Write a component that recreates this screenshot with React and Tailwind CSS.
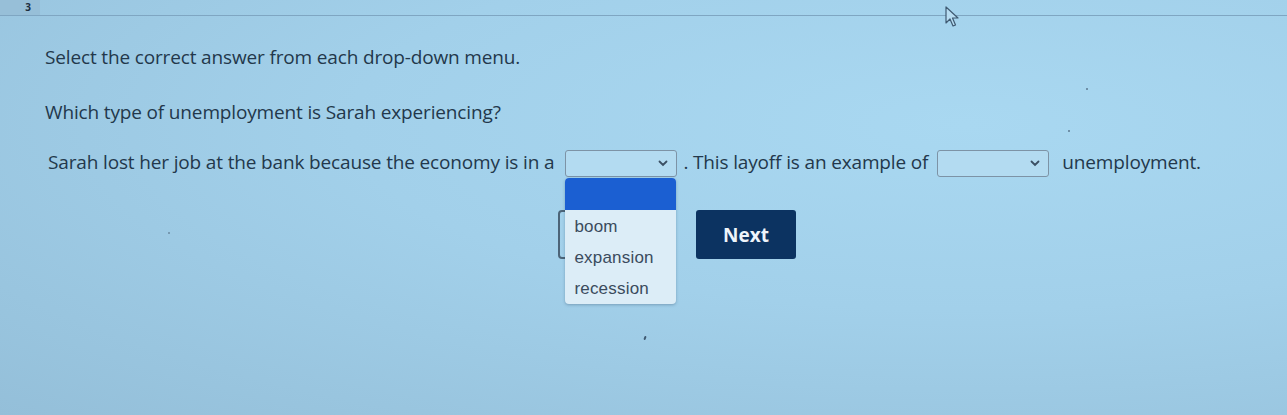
import React from 'react';

const OPTIONS = ['boom', 'expansion', 'recession'];

function Chevron() {
  return (
    <svg width="10" height="7" viewBox="0 0 10 7" className="text-[#3b4f63]">
      <path d="M1.5 1.5 L5 5 L8.5 1.5" fill="none" stroke="currentColor" strokeWidth="1.8" strokeLinecap="round" />
    </svg>
  );
}

function Select({ open }) {
  return (
    <span className="relative inline-flex align-middle">
      <span className="flex h-[27px] w-[112px] items-center justify-end rounded-[3px] border border-[#7d93a6] bg-[#b3dbf1] pr-2">
        <Chevron />
      </span>
      {open && (
        <div className="absolute left-0 top-[28px] z-10 w-[111px] overflow-hidden rounded-[4px] bg-[#dcedf7] shadow-[0_1px_3px_rgba(40,70,100,0.35)]">
          <div className="h-[32px] bg-[#1b5fd2]" />
          <ul className="pb-0 pt-[1px] font-['Liberation_Sans',Arial,sans-serif] text-[17px] tracking-[0.2px] text-[#3a4b5d]">
            {OPTIONS.map((o) => (
              <li key={o} className="h-[31px] px-[9px] leading-[31px]">{o}</li>
            ))}
          </ul>
        </div>
      )}
    </span>
  );
}

export default function App() {
  return (
    <div className="relative h-[415px] w-full overflow-hidden bg-[radial-gradient(ellipse_at_75%_30%,#a9d8f1_0%,#a2d0ea_45%,#94bfd9_100%)] font-['Open_Sans',sans-serif] text-[#23384b]">
      {/* top strip */}
      <div className="flex h-[16px] border-b border-[#7fa6c2]">
        <div className="flex w-[40px] items-start justify-end bg-[#97bfd8] pr-[9px] pt-[2px] text-[10px] font-bold leading-[11px] text-[#1c2e40]">3</div>
      </div>

      {/* cursor */}
      <svg className="absolute left-[944px] top-[6px]" width="16" height="22" viewBox="0 0 16 22">
        <path d="M2 1 L2 17 L6 13 L9 20 L11.5 19 L8.5 12 L14 12 Z" fill="#b8ddf2" stroke="#3f5a72" strokeWidth="1.2" strokeLinejoin="round" />
      </svg>

      <div className="pl-[45px] pt-[26px] text-[19px] font-medium tracking-[-0.15px]">
        <p className="leading-[30px]">Select the correct answer from each drop-down menu.</p>
        <p className="mt-[25px] leading-[30px]">Which type of unemployment is Sarah experiencing?</p>

        <div className="mt-[20px] flex items-center pl-[3px] leading-[30px]">
          <span>Sarah lost her job at the bank because the economy is in a</span>
          <span className="ml-[11px]"><Select open /></span>
          <span className="ml-[6px]">. This layoff is an example of</span>
          <span className="ml-[9px]"><Select /></span>
          <span className="ml-[13px]">unemployment.</span>
        </div>

        <div className="ml-[513px] mt-[33px] flex gap-[28px]">
          <button className="h-[49px] w-[110px] rounded-[4px] border-2 border-[#4c6478] bg-transparent" />
          <button className="h-[49px] w-[100px] rounded-[3px] bg-[#0c3361] text-[19px] font-bold tracking-normal text-[#eef4fa]">
            Next
          </button>
        </div>
      </div>

      <span className="absolute left-[1086px] top-[88px] h-[2px] w-[2px] rounded-full bg-[#5d7890]" />
      <span className="absolute left-[1068px] top-[130px] h-[2px] w-[2px] rounded-full bg-[#5d7890]" />
      <span className="absolute left-[168px] top-[232px] h-[2px] w-[2px] rounded-full bg-[#6b8aa2]" />
      <span className="absolute left-[644px] top-[336px] h-[4px] w-[2px] rotate-[20deg] rounded-full bg-[#3f5a72]" />
    </div>
  );
}
